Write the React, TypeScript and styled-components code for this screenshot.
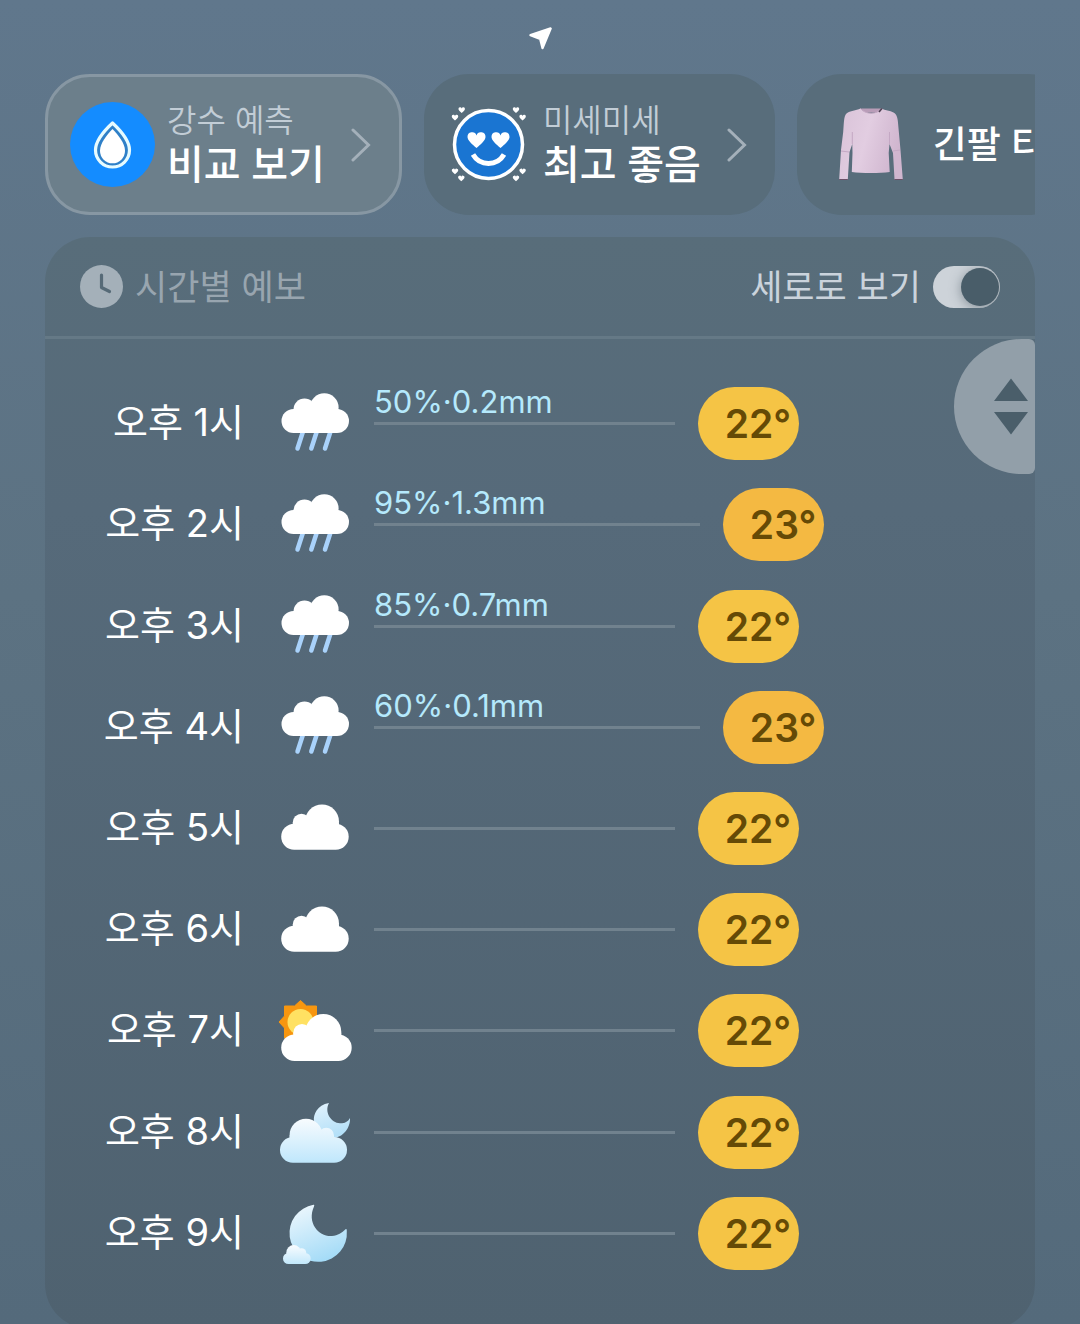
import React, { useState } from 'react';
import styled, { createGlobalStyle, css } from 'styled-components';

const GlobalStyle = createGlobalStyle`
  * {
    box-sizing: border-box;
  }

  body {
    margin: 0;
    font-family: Inter, 'Noto Sans CJK KR', sans-serif;
    color: #fff;
    background-color: #556b7c;
  }

  button {
    padding: 0;
    border: 0;
    font: inherit;
    color: inherit;
    background: none;
    cursor: pointer;
  }

  svg {
    display: block;
    flex: none;
  }
`;

const Page = styled.main`
  height: 100vh;
  padding: 0 45px;
  overflow: hidden;
  background: linear-gradient(#60778c, #5c7282 45%, #546a7b);
`;

const Location = styled.div`
  display: flex;
  justify-content: center;
  height: 74px;
  padding-top: 26px;
`;

const Chips = styled.div`
  display: flex;
  gap: 22px;
  overflow: hidden;
`;

const Chip = styled.button<{ $active?: boolean }>`
  display: flex;
  flex: none;
  align-items: center;
  gap: 12px;
  height: 141px;
  padding: 0 28px 0 22px;
  border-radius: 45px;
  text-align: left;
  background-color: #586d7b;

  ${props =>
    props.$active &&
    css`
      border: 3px solid #8797a3;
      background-color: #6c7f8b;
    `}
`;

const ChipText = styled.span`
  display: flex;
  flex-direction: column;
  margin-right: 14px;
  padding-bottom: 4px;
`;

const ChipLabel = styled.span`
  font-size: 32px;
  font-weight: 350;
  line-height: 44px;
  color: #c2cdd6;
`;

const ChipValue = styled.span<{ $small?: boolean }>`
  font-size: ${props => (props.$small ? 37 : 40)}px;
  font-weight: 450;
  line-height: 44px;
  white-space: nowrap;
`;

const Panel = styled.section`
  position: relative;
  margin-top: 22px;
  border-radius: 45px;
  background: linear-gradient(#586d7a, #566a7a 25%, #4f6270);
`;

const PanelHeader = styled.header`
  display: flex;
  align-items: center;
  justify-content: space-between;
  height: 102px;
  padding: 0 35px;
  border-bottom: 3px solid #657986;
`;

const Title = styled.h2`
  display: flex;
  align-items: center;
  gap: 12px;
  margin: 0;
  font-size: 35px;
  font-weight: 400;
  line-height: 44px;
  color: #98a5af;
`;

const SwitchLabel = styled.label`
  display: flex;
  align-items: center;
  gap: 12px;
  font-size: 35px;
  line-height: 44px;
  color: #cad3dc;
  cursor: pointer;
`;

const Switch = styled.input`
  display: flex;
  align-items: center;
  width: 67px;
  height: 42px;
  margin: 0;
  padding: 1px;
  border-radius: 21px;
  overflow: hidden;
  background-color: #7e8f9b;
  appearance: none;
  cursor: pointer;

  &::before {
    content: '';
    width: 38px;
    height: 38px;
    border-radius: 50%;
    background-color: #495d69;
    box-shadow: 0 2px 12px rgba(60, 75, 85, 0.5);
  }

  &:checked {
    justify-content: flex-end;
    background-color: #cdd3d9;
  }
`;

const ScrollHandle = styled.button`
  position: absolute;
  top: 102px;
  right: 0;
  display: flex;
  align-items: center;
  justify-content: flex-end;
  width: 81px;
  height: 135px;
  padding-right: 7px;
  border-radius: 68px 6px 6px 68px;
  background-color: #929fa9;
`;

const HoursWrap = styled.div`
  padding: 34px 0 45px;
`;

const Hours = styled.ol`
  display: grid;
  grid-template-rows: repeat(9, 1fr);
  min-height: 911px;
  margin: 0;
  padding: 0;
  list-style-type: none;
`;

const Hour = styled.li`
  display: grid;
  grid-template-columns: 199px 80px 1fr;
  align-items: center;
`;

const Time = styled.time`
  padding-bottom: 3px;
  font-size: 38px;
  line-height: 44px;
  text-align: right;
`;

const IconCell = styled.span`
  margin-left: 31px;
`;

const Track = styled.div`
  display: flex;
  align-items: center;
  gap: 23px;
  margin-left: 50px;
`;

const Bar = styled.div`
  position: relative;
  height: 3px;
  background-color: #71828e;
`;

const Rain = styled.span`
  position: absolute;
  bottom: 3px;
  left: 0;
  font-size: 31px;
  line-height: 40px;
  white-space: nowrap;
  color: #b5e9fc;
`;

const Temp = styled.span<{ $warm?: boolean }>`
  width: 101px;
  height: 73px;
  padding-left: 27px;
  border-radius: 37px;
  font-size: 39px;
  font-weight: 600;
  line-height: 73px;
  color: #654a06;
  background-color: ${props => (props.$warm ? '#f4b942' : '#f5c445')};
`;

const LocationIcon = () => (
  <svg width="24" height="24" viewBox="0 0 24 24">
    <path
      d="M22.600 2.500 2.500 9.200 12.200 12.800 14.500 22Z"
      fill="#fff"
      stroke="#fff"
      strokeWidth="2.400"
      strokeLinejoin="round"
    />
  </svg>
);

const DropIcon = () => (
  <svg width="85" height="85" viewBox="0 0 85 85">
    <circle cx="42.5" cy="42.5" r="42.5" fill="#148cff" />
    <path
      d="M42.500 21C35 28 25.500 38 25.500 48a17 17 0 0 0 34 0C59.500 38 50 28 42.500 21Z"
      fill="#2f80c8"
      stroke="#e6fbff"
      strokeWidth="3.200"
      strokeLinejoin="round"
    />
    <path d="M42.500 27C37 33 30 41 30 48.800a12.500 12.500 0 0 0 25 0C55 41 48 33 42.500 27Z" fill="#fff" />
  </svg>
);

const HEART = 'M0 7.500C-4 4-9 0-9-3.500A4.600 4.600 0 0 1 0-5A4.600 4.600 0 0 1 9-3.500C9 0 4 4 0 7.500Z';

const smallHearts = [
  [15.7, 8.3],
  [9, 15.7],
  [70, 8.3],
  [76.6, 15.7],
  [9, 69.6],
  [15.3, 76.6],
  [76.6, 69.6],
  [70, 76.6],
];

const FaceIcon = () => (
  <svg width="85" height="85" viewBox="0 0 85 85">
    <circle cx="42.5" cy="42.5" r="34" fill="#1a75d2" stroke="#fff" strokeWidth="3.500" />
    <path d={HEART} transform="translate(30.500 38.500)" fill="#fff" />
    <path d={HEART} transform="translate(54.500 38.500)" fill="#fff" />
    <path d="M27 52.500C34 64.500 51 64.500 58 52.500" fill="none" stroke="#fff" strokeWidth="5" />
    {smallHearts.map(([x, y]) => (
      <path key={`${x}-${y}`} d={HEART} transform={`translate(${x} ${y}) scale(0.360)`} fill="#fff" />
    ))}
  </svg>
);

const ShirtIcon = () => (
  <svg width="102" height="73" viewBox="-20 0 102 73">
    <defs>
      <linearGradient id="shirt" x1="0" x2="1" y1="0" y2="0.300">
        <stop offset="0" stopColor="#d9c3d8" />
        <stop offset="0.500" stopColor="#e2cde1" />
        <stop offset="1" stopColor="#d0b6cf" />
      </linearGradient>
    </defs>
    <path d="M22 .5h20l-3 4H25Z" fill="#b99db8" />
    <path
      d="M21.500.5C17 2.500 11 2.500 7.500 5.500 4.500 8.500 5 16 4.200 24L2 42 .2 71.500h8.600L10.500 44l2.800-8 .2 9-.7 19c10 1.400 28 1.400 37.900 0l-1-19 .8-9L54 45l1.500 26.500h8.300L61.500 42 59.300 18C58.800 10 58 6.500 54.500 4.500 51 2.700 46 2.300 42.500.5 38.500 6.800 26 6.800 21.500.5Z"
      fill="url(#shirt)"
    />
    <path d="M21.500.5C26 6.800 38.500 6.800 42.500.5" fill="none" stroke="#c5a9c4" />
    <path d="M2 43l8 1M54 43l7-1M13.300 24v12M50.500 24v12" fill="none" stroke="#c4a8c4" />
    <path d="M40 4 43 .500" stroke="#4c3e50" strokeWidth="1.500" />
    <path d="M.2 71.500h8.600M55.500 71.500h8.300" stroke="#6b5168" />
  </svg>
);

const ChevronIcon = () => (
  <svg width="20" height="34" viewBox="0 0 20 34">
    <path d="m2 2 15.500 15L2 32" fill="none" stroke="#a4b0ba" strokeWidth="3" strokeLinecap="round" />
  </svg>
);

const ClockIcon = () => (
  <svg width="43" height="43" viewBox="0 0 43 43">
    <circle cx="21.5" cy="21.5" r="21.500" fill="#a4b0b9" />
    <path d="M21.500 10v12.500l8 4" fill="none" stroke="#566a77" strokeWidth="3.200" strokeLinecap="round" strokeLinejoin="round" />
  </svg>
);

const ArrowsIcon = () => (
  <svg width="34" height="57" viewBox="0 0 34 57">
    <path d="M17 .500 34 23H0ZM0 34h34L17 56.500Z" fill="#4a5e6a" />
  </svg>
);

const WeatherSvg = styled.svg.attrs({ width: 80, height: 68, viewBox: '0 0 80 68' })``;

const RainIcon = () => (
  <WeatherSvg>
    <path
      d="M28.500 40 22.500 58.500M42.300 40l-6 18.500M56 40l-6 18.500"
      stroke="#a9d2fb"
      strokeWidth="4.500"
      strokeLinecap="round"
    />
    <g fill="#fff">
      <circle cx="29.500" cy="19.500" r="11" />
      <circle cx="49.300" cy="17.500" r="14.300" />
      <rect x="18.500" y="19" width="45" height="12" />
      <rect x="6.500" y="19" width="67.500" height="24" rx="12" />
    </g>
  </WeatherSvg>
);

const CloudIcon = () => (
  <WeatherSvg>
    <g fill="#fff">
      <circle cx="26.500" cy="28.500" r="8.700" />
      <circle cx="47" cy="27.500" r="17" />
      <rect x="17.800" y="28.500" width="46.200" height="14" />
      <rect x="6.200" y="29.700" width="67.500" height="26" rx="13" />
    </g>
  </WeatherSvg>
);

const SunIcon = () => (
  <WeatherSvg>
    <path
      d="M25.500 3.500 31.500 9H41.500V19L47.500 25 41.500 31V41H31.500L25.500 47 19.500 41H9.500V31L4 25 9.500 19V9H19.500Z"
      fill="#f7960f"
      stroke="#f7960f"
      strokeLinejoin="round"
    />
    <circle cx="25.500" cy="25" r="13" fill="#ffe162" />
    <g fill="#fff">
      <circle cx="27" cy="35.700" r="8.700" />
      <circle cx="48.300" cy="35" r="18" />
      <rect x="18.300" y="35.700" width="48" height="15" />
      <rect x="6.200" y="37.400" width="70.500" height="26.600" rx="13.300" />
    </g>
  </WeatherSvg>
);

const MoonCloudIcon = ({ id }: { id: string }) => (
  <WeatherSvg>
    <defs>
      <linearGradient id={`${id}-cloud`} gradientUnits="userSpaceOnUse" x1="0" x2="0" y1="21" y2="65">
        <stop offset="0" stopColor="#f7fbfe" />
        <stop offset="1" stopColor="#bfe7fc" />
      </linearGradient>
      <linearGradient id={`${id}-moon`} x1="0" x2="0.300" y1="0" y2="1">
        <stop offset="0" stopColor="#e3f3fd" />
        <stop offset="1" stopColor="#b4e0f8" />
      </linearGradient>
    </defs>
    <path d="M54 5C42 7 38 17 39 23C41 34 48 40 57 40C68 40 75.500 30 75 20C73 24 69 25.500 65 25.300C56 25 49 14 54 5Z" fill={`url(#${id}-moon)`} />
    <g fill={`url(#${id}-cloud)`}>
      <circle cx="31" cy="37.200" r="16.400" />
      <circle cx="51.300" cy="37.500" r="7.700" />
      <rect x="14.600" y="37.500" width="44.400" height="14" />
      <rect x="5" y="39" width="67" height="25.700" rx="12.800" />
    </g>
  </WeatherSvg>
);

const MoonIcon = ({ id }: { id: string }) => (
  <WeatherSvg>
    <defs>
      <linearGradient id={`${id}-moon`} x1="0.200" x2="0.600" y1="0" y2="1">
        <stop offset="0" stopColor="#edf7fd" />
        <stop offset="1" stopColor="#a3dbf7" />
      </linearGradient>
      <linearGradient id={`${id}-cloud`} gradientUnits="userSpaceOnUse" x1="0" x2="0" y1="46" y2="65">
        <stop offset="0" stopColor="#f9fcff" />
        <stop offset="1" stopColor="#c2e8fb" />
      </linearGradient>
    </defs>
    <path
      d="M38.500 5.800Q39.800 5.500 39 7.500C31.500 24 44 38 57 37C63 36.500 67 34 70.500 30.300Q72 29.500 71.800 32A28.700 28.700 0 1 1 38.500 5.800Z"
      fill={`url(#${id}-moon)`}
    />
    <g fill={`url(#${id}-cloud)`}>
      <circle cx="18.700" cy="53.300" r="7.300" />
      <circle cx="26.500" cy="54" r="4.800" />
      <rect x="11.500" y="53.500" width="19.500" height="6" />
      <rect x="8" y="54" width="27.700" height="11" rx="5.500" />
    </g>
  </WeatherSvg>
);

type Weather = 'rain' | 'cloud' | 'sun' | 'moonCloud' | 'moon';

const icons: Record<Weather, React.ReactNode> = {
  rain: <RainIcon />,
  cloud: <CloudIcon />,
  sun: <SunIcon />,
  moonCloud: <MoonCloudIcon id="night" />,
  moon: <MoonIcon id="clear" />,
};

interface Forecast {
  hour: number;
  weather: Weather;
  temp: number;
  rain?: string;
}

const forecast: Forecast[] = [
  { hour: 1, weather: 'rain', temp: 22, rain: '50%·0.2mm' },
  { hour: 2, weather: 'rain', temp: 23, rain: '95%·1.3mm' },
  { hour: 3, weather: 'rain', temp: 22, rain: '85%·0.7mm' },
  { hour: 4, weather: 'rain', temp: 23, rain: '60%·0.1mm' },
  { hour: 5, weather: 'cloud', temp: 22 },
  { hour: 6, weather: 'cloud', temp: 22 },
  { hour: 7, weather: 'sun', temp: 22 },
  { hour: 8, weather: 'moonCloud', temp: 22 },
  { hour: 9, weather: 'moon', temp: 22 },
];

// share of the track, in percent
const barWidth = (temp: number) => 45.5 + (temp - 22) * 3.8;

const App: React.FC = () => {
  const [vertical, setVertical] = useState(true);

  return (
    <>
      <GlobalStyle />
      <Page lang="ko">
        <Location>
          <LocationIcon />
        </Location>
        <Chips>
          <Chip type="button" $active>
            <DropIcon />
            <ChipText>
              <ChipLabel>강수 예측</ChipLabel>
              <ChipValue>비교 보기</ChipValue>
            </ChipText>
            <ChevronIcon />
          </Chip>
          <Chip type="button">
            <FaceIcon />
            <ChipText>
              <ChipLabel>미세미세</ChipLabel>
              <ChipValue>최고 좋음</ChipValue>
            </ChipText>
            <ChevronIcon />
          </Chip>
          <Chip type="button">
            <ShirtIcon />
            <ChipValue $small>긴팔 티</ChipValue>
          </Chip>
        </Chips>
        <Panel>
          <PanelHeader>
            <Title>
              <ClockIcon />
              시간별 예보
            </Title>
            <SwitchLabel>
              세로로 보기
              <Switch
                type="checkbox"
                role="switch"
                checked={vertical}
                onChange={e => setVertical(e.target.checked)}
              />
            </SwitchLabel>
          </PanelHeader>
          <HoursWrap>
            <Hours>
              {forecast.map(item => (
                <Hour key={item.hour}>
                  <Time dateTime={`${item.hour + 12}:00`}>오후 {item.hour}시</Time>
                  <IconCell>{icons[item.weather]}</IconCell>
                  <Track>
                    <Bar style={{ width: `${barWidth(item.temp)}%` }}>
                      {item.rain && <Rain>{item.rain}</Rain>}
                    </Bar>
                    <Temp $warm={item.temp > 22}>{item.temp}°</Temp>
                  </Track>
                </Hour>
              ))}
            </Hours>
          </HoursWrap>
          <ScrollHandle type="button" aria-label="스크롤">
            <ArrowsIcon />
          </ScrollHandle>
        </Panel>
      </Page>
    </>
  );
};

export default App;
